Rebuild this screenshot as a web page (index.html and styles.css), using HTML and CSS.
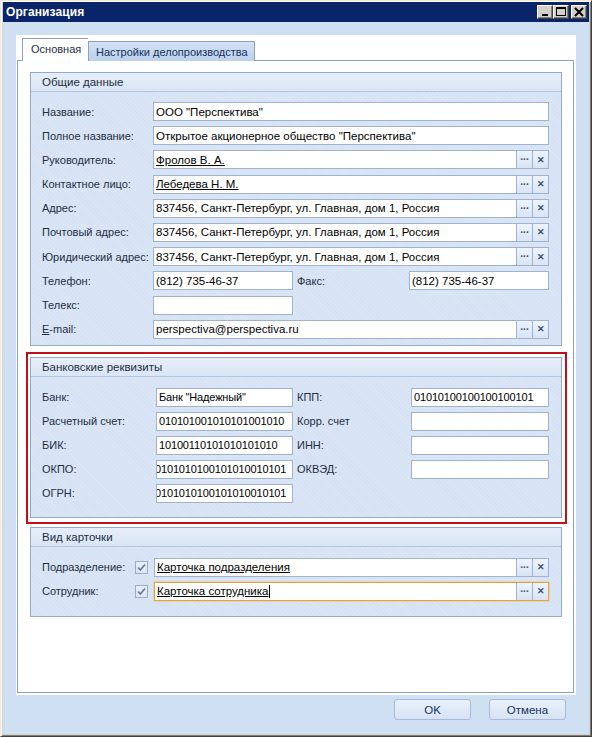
FILE: index.html
```html
<!DOCTYPE html>
<html lang="ru">
<head>
<meta charset="utf-8">
<link rel="stylesheet" href="styles.css">
</head>
<body>
<div class="window">
  <div class="titlebar">
    <span class="title">Организация</span>
    <div class="ctrls">
      <span class="cbtn"><svg width="14" height="12" viewBox="0 0 14 12"><rect x="4" y="8" width="6" height="2" fill="#000"/></svg></span>
      <span class="cbtn"><svg width="14" height="12" viewBox="0 0 14 12"><rect x="2.5" y="1.5" width="9" height="8" fill="none" stroke="#000"/><rect x="2" y="1" width="10" height="2" fill="#000"/></svg></span>
      <span class="cbtn close"><svg width="14" height="12" viewBox="0 0 14 12"><path d="M3 2 L11 10 M11 2 L3 10" stroke="#000" stroke-width="2"/></svg></span>
    </div>
  </div>
  <div class="client">
    <div class="tabctl">
      <div class="tabs">
        <div class="tab active">Основная</div>
        <div class="tab">Настройки делопроизводства</div>
      </div>
      <div class="page">
        <div class="group g1">
          <div class="ghead">Общие данные</div>
          <div class="gbody">
            <div class="row"><span class="lbl">Название:</span><div class="field"><span class="inp">ООО "Перспектива"</span></div></div>
            <div class="row"><span class="lbl">Полное название:</span><div class="field"><span class="inp">Открытое акционерное общество "Перспектива"</span></div></div>
            <div class="row"><span class="lbl">Руководитель:</span><div class="field"><span class="inp link">Фролов В. А.</span><span class="eb">···</span><span class="eb x">✕</span></div></div>
            <div class="row"><span class="lbl">Контактное лицо:</span><div class="field"><span class="inp link">Лебедева Н. М.</span><span class="eb">···</span><span class="eb x">✕</span></div></div>
            <div class="row"><span class="lbl">Адрес:</span><div class="field"><span class="inp">837456, Санкт-Петербург, ул. Главная, дом 1, Россия</span><span class="eb">···</span><span class="eb x">✕</span></div></div>
            <div class="row"><span class="lbl">Почтовый адрес:</span><div class="field"><span class="inp">837456, Санкт-Петербург, ул. Главная, дом 1, Россия</span><span class="eb">···</span><span class="eb x">✕</span></div></div>
            <div class="row"><span class="lbl">Юридический адрес:</span><div class="field"><span class="inp">837456, Санкт-Петербург, ул. Главная, дом 1, Россия</span><span class="eb">···</span><span class="eb x">✕</span></div></div>
            <div class="row phone"><span class="lbl">Телефон:</span><span class="inp w140">(812) 735-46-37</span><span class="lbl2">Факс:</span><span class="inp grow">(812) 735-46-37</span></div>
            <div class="row"><span class="lbl">Телекс:</span><span class="inp w140"></span></div>
            <div class="row"><span class="lbl"><u>E</u>-mail:</span><div class="field"><span class="inp">perspectiva@perspectiva.ru</span><span class="eb">···</span><span class="eb x">✕</span></div></div>
          </div>
        </div>

        <div class="hl">
          <div class="group g2">
            <div class="ghead">Банковские реквизиты</div>
            <div class="gbody bank">
              <div class="brow"><span class="blbl">Банк:</span><span class="inp bi">Банк "Надежный"</span><span class="blbl r">КПП:</span><span class="inp bi2">01010100100100100101</span></div>
              <div class="brow"><span class="blbl">Расчетный счет:</span><span class="inp bi">010101001010101001010</span><span class="blbl r">Корр. счет</span><span class="inp bi2"></span></div>
              <div class="brow"><span class="blbl">БИК:</span><span class="inp bi">10100110101010101010</span><span class="blbl r">ИНН:</span><span class="inp bi2"></span></div>
              <div class="brow"><span class="blbl">ОКПО:</span><span class="inp bi clip">0101010100101010010101</span><span class="blbl r">ОКВЭД:</span><span class="inp bi2"></span></div>
              <div class="brow"><span class="blbl">ОГРН:</span><span class="inp bi clip">0101010100101010010101</span></div>
            </div>
          </div>
        </div>

        <div class="group g3">
          <div class="ghead">Вид карточки</div>
          <div class="gbody card">
            <div class="crow"><span class="clbl">Подразделение:</span><span class="chk"><svg width="11" height="11" viewBox="0 0 11 11"><path d="M2 5.5 L4.3 8 L9 2.5" fill="none" stroke="#6b7d99" stroke-width="1.8"/></svg></span><div class="field"><span class="inp link">Карточка подразделения</span><span class="eb">···</span><span class="eb x">✕</span></div></div>
            <div class="crow"><span class="clbl">Сотрудник:</span><span class="chk"><svg width="11" height="11" viewBox="0 0 11 11"><path d="M2 5.5 L4.3 8 L9 2.5" fill="none" stroke="#6b7d99" stroke-width="1.8"/></svg></span><div class="field focus"><span class="inp link">Карточка сотрудника<span class="caret"></span></span><span class="eb">···</span><span class="eb x">✕</span></div></div>
          </div>
        </div>
      </div>
    </div>
    <div class="footer">
      <span class="btn">OK</span>
      <span class="btn">Отмена</span>
    </div>
  </div>
</div>
</body>
</html>
```

FILE: styles.css
```css
* { box-sizing: border-box; }
html, body { margin: 0; padding: 0; }
body {
  width: 592px; height: 737px; overflow: hidden;
  font-family: "Liberation Sans", Arial, sans-serif;
  font-size: 11px;
  color: #1e2e44;
  background: #d4d0c8;
}
.window {
  width: 592px; height: 737px;
  background: #d4d0c8;
  border-top: 1px solid #ece9d8;
  border-left: 1px solid #ece9d8;
  border-right: 1px solid #404040;
  border-bottom: 1px solid #404040;
  padding: 1px 2px 2px 2px;
  display: flex; flex-direction: column;
  box-shadow: inset 1px 1px 0 #fff, inset -1px -1px 0 #808080;
}
.titlebar {
  height: 20px;
  background: #0a246a;
  display: flex; align-items: center; justify-content: space-between;
  padding: 0 2px 0 3px;
  flex: none;
}
.title { color: #fff; font-weight: bold; font-size: 12px; letter-spacing: 0.1px; }
.ctrls { display: flex; align-items: center; }
.cbtn {
  width: 16px; height: 14px;
  background: #d4d0c8;
  border-top: 1px solid #fff; border-left: 1px solid #fff;
  border-right: 1px solid #404040; border-bottom: 1px solid #404040;
  box-shadow: inset -1px -1px 0 #808080;
  display: flex; align-items: center; justify-content: center;
}
.cbtn.close { margin-left: 2px; }
.client {
  flex: 1;
  background: #cfe0f2;
  padding: 13px 0 0 13px;
  display: flex; flex-direction: column;
}
.tabctl {
  width: 560px; height: 660px;
  background: #fff;
  padding: 3px 3px 2px 1px;
  display: flex; flex-direction: column;
}
.tabs { display: flex; align-items: flex-end; padding-left: 5px; height: 23px; position: relative; z-index: 1; }
.tab {
  height: 20px;
  padding: 0 6px 0 7px;
  border: 1px solid #8da2c2;
  border-bottom: none;
  background: linear-gradient(#d3e1f3, #bcd1ec);
  color: #15315e;
  font-size: 11px;
  display: flex; align-items: center;
}
.tab.active {
  height: 23px;
  width: 66px;
  background: #fff;
  color: #1e2e44;
  padding: 0 0 2px 8px;
  border-right: none;
}
.page {
  flex: 1;
  width: 557px;
  border: 1px solid #8da2c2;
  margin-top: -1px;
  padding: 11px 0 0 12px;
  display: flex; flex-direction: column;
}
.group {
  width: 532px;
  border: 1px solid #93abcb;
  background-color: #d7e3f4;
  background-image: repeating-linear-gradient(45deg, rgba(255,255,255,0.12) 0 1px, transparent 1px 3px);
}
.ghead {
  height: 19px;
  padding-left: 11px;
  display: flex; align-items: center;
  background: linear-gradient(#e7eef9, #d9e5f5);
  border-bottom: 1px solid #b3c7e1;
  color: #1e2e44;
  font-size: 11.5px;
}
.gbody { padding: 10px 12px 6px 11px; display: flex; flex-direction: column; gap: 5.2px; }
.row { display: flex; align-items: center; height: 19px; }
.lbl { width: 111px; flex: none; }
.field { flex: 1; display: flex; height: 19px; border: 1px solid #9fb3cf; background: #fff; }
.field .inp { border: none; flex: 1; height: 17px; }
.inp {
  height: 19px;
  background: #fff;
  border: 1px solid #9fb3cf;
  padding: 0 2px;
  color: #000;
  display: flex; align-items: center;
  white-space: nowrap; overflow: hidden;
  font-size: 11.5px;
}
.link { text-decoration: underline; }
.eb {
  width: 16px; flex: none; height: 17px;
  border-left: 1px solid #9fb3cf;
  background: linear-gradient(#edf3fc, #d8e4f5);
  display: flex; align-items: center; justify-content: center;
  color: #3d4f73; font-weight: bold; font-size: 10px; letter-spacing: -0.5px;
}
.eb.x { font-size: 9px; }
.w140 { width: 140px; flex: none; }
.lbl2 { width: 116px; flex: none; padding-left: 4px; }
.grow { flex: 1; }

.hl {
  width: 541px;
  margin-left: -4px;
  margin-top: 6px;
  border: 2px solid #c0101a;
  padding: 3px 2px 4px 2px;
}
.bank { padding-top: 11px; padding-bottom: 14px; gap: 5px; }
.brow { display: flex; align-items: center; height: 19px; }
.blbl { width: 114px; flex: none; }
.blbl.r { padding-left: 4px; width: 118px; }
.bi { width: 137px; flex: none; font-size: 11px; letter-spacing: -0.15px; }
.bi2 { flex: 1; font-size: 11px; letter-spacing: -0.15px; }
.clip { text-indent: -4px; }

.g3 { margin-top: 3px; }
.card { padding-top: 11px; padding-bottom: 15px; gap: 5px; }
.crow { display: flex; align-items: center; height: 19px; }
.clbl { width: 93px; flex: none; }
.chk {
  width: 13px; height: 13px; flex: none;
  border: 1px solid #99acc8;
  background: linear-gradient(#e9eff8, #dbe5f3);
  display: flex; align-items: center; justify-content: center;
  margin-right: 6px;
}
.field.focus { border-color: #e3a640; box-shadow: 0 0 0 0.5px #f0c070; }
.field.focus .eb { border-left-color: #9fb3cf; }
.caret { display: inline-block; width: 1px; height: 13px; background: #000; margin-left: 1px; }

.footer { display: flex; justify-content: flex-end; gap: 18px; padding: 4px 23px 0 0; }
.btn {
  width: 77px; height: 21px;
  border: 1px solid #a7badb;
  border-radius: 3px;
  background: linear-gradient(#e9f0fa, #d7e3f4);
  display: flex; align-items: center; justify-content: center;
  color: #15315e; font-size: 11.5px;
}
```
